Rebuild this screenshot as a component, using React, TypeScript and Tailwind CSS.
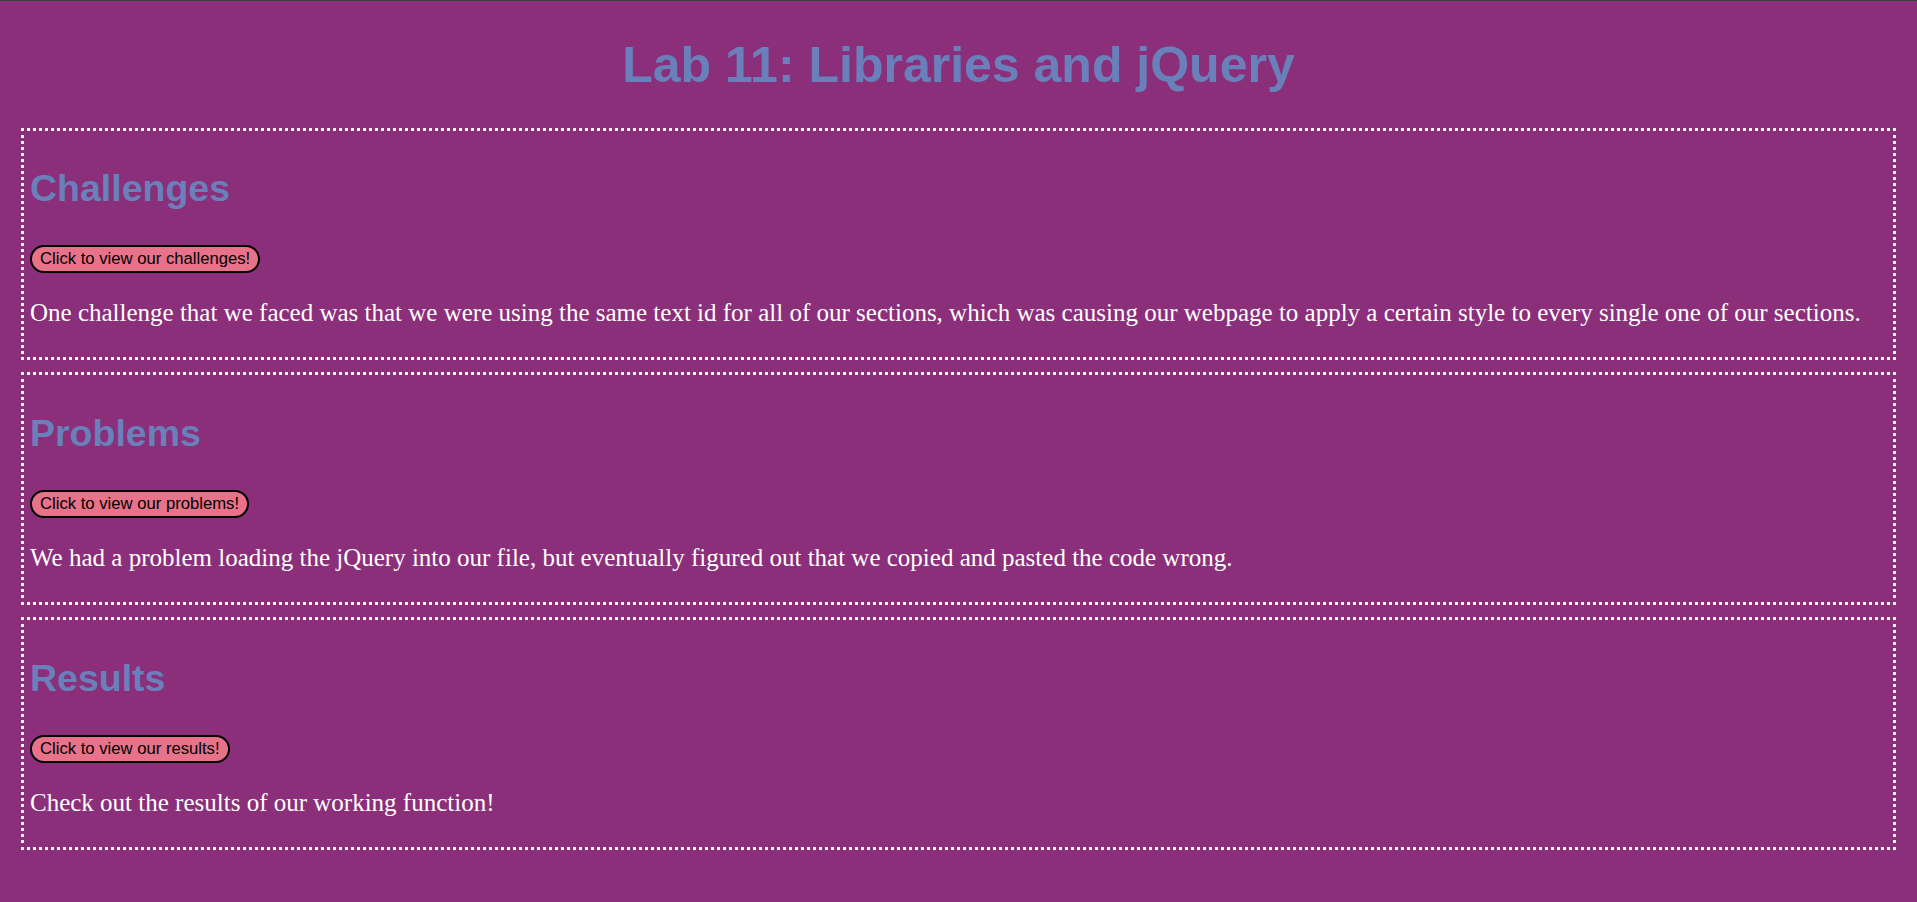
const sections = [
  {
    title: "Challenges",
    button: "Click to view our challenges!",
    text: "One challenge that we faced was that we were using the same text id for all of our sections, which was causing our webpage to apply a certain style to every single one of our sections.",
  },
  {
    title: "Problems",
    button: "Click to view our problems!",
    text: "We had a problem loading the jQuery into our file, but eventually figured out that we copied and pasted the code wrong.",
  },
  {
    title: "Results",
    button: "Click to view our results!",
    text: "Check out the results of our working function!",
  },
];

function Section({ title, button, text }: { title: string; button: string; text: string }) {
  return (
    <section className="border-[3px] border-dotted border-white px-[6px] pt-[6px] pb-[30.5px]">
      <h2 className="mt-[30.5px] text-[37.5px] font-bold leading-[normal] text-[#6a80ba] font-['Liberation_Sans',Arial,sans-serif]">
        {title}
      </h2>
      <div className="mt-[35.3px] flex">
        <button className="rounded-[14px] border-2 border-black bg-[#e8728a] px-[8px] py-[2px] text-[16.67px] leading-[normal] text-black font-['Liberation_Sans',Arial,sans-serif]">
          {button}
        </button>
      </div>
      <p className="mt-[25.7px] text-[25px] leading-[normal] text-white font-['Liberation_Serif','Times_New_Roman',serif]">
        {text}
      </p>
    </section>
  );
}

export default function App() {
  return (
    <div className="min-h-screen border-t border-[#3c3c3c] bg-[#8b2f7b] pb-[52px]">
      <h1 className="pt-[35px] text-center text-[50px] font-bold leading-[normal] text-[#6a80ba] font-['Liberation_Sans',Arial,sans-serif]">
        Lab 11: Libraries and jQuery
      </h1>
      <div className="mx-[21px] mt-[33.5px] flex flex-col gap-[12px]">
        {sections.map((s) => (
          <Section key={s.title} {...s} />
        ))}
      </div>
    </div>
  );
}
